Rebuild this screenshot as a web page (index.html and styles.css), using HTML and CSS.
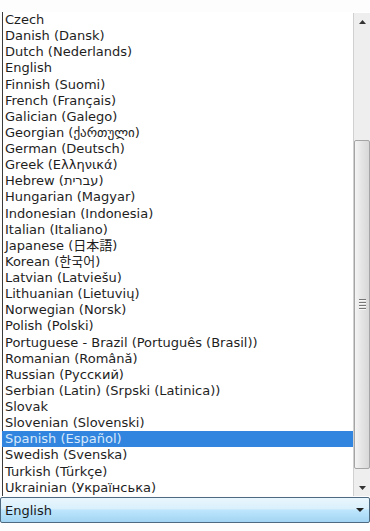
FILE: index.html
```html
<!DOCTYPE html>
<html>
<head>
    <link rel="stylesheet" href="styles.css">
</head>
<body>
    <div class="picker">
        <div class="listbox">
            <ul class="options">
                <li>Czech</li>
                <li>Danish (Dansk)</li>
                <li>Dutch (Nederlands)</li>
                <li>English</li>
                <li>Finnish (Suomi)</li>
                <li>French (Français)</li>
                <li>Galician (Galego)</li>
                <li>Georgian (ქართული)</li>
                <li>German (Deutsch)</li>
                <li>Greek (Ελληνικά)</li>
                <li>Hebrew (עברית)</li>
                <li>Hungarian (Magyar)</li>
                <li>Indonesian (Indonesia)</li>
                <li>Italian (Italiano)</li>
                <li>Japanese (日本語)</li>
                <li>Korean (한국어)</li>
                <li>Latvian (Latviešu)</li>
                <li>Lithuanian (Lietuvių)</li>
                <li>Norwegian (Norsk)</li>
                <li>Polish (Polski)</li>
                <li>Portuguese - Brazil (Português (Brasil))</li>
                <li>Romanian (Română)</li>
                <li>Russian (Русский)</li>
                <li>Serbian (Latin) (Srpski (Latinica))</li>
                <li>Slovak</li>
                <li>Slovenian (Slovenski)</li>
                <li class="selected">Spanish (Español)</li>
                <li>Swedish (Svenska)</li>
                <li>Turkish (Türkçe)</li>
                <li>Ukrainian (Українська)</li>
            </ul>
            <div class="scrollbar">
                <div class="arrow">
                    <svg width="7" height="4" viewBox="0 0 7 4"><path d="M0 4 L3.5 0 L7 4 Z" fill="#333"/></svg>
                </div>
                <div class="gap-top"></div>
                <div class="thumb">
                    <span class="grip"></span>
                    <span class="grip"></span>
                    <span class="grip"></span>
                    <span class="grip"></span>
                </div>
                <div class="gap-bottom"></div>
                <div class="arrow">
                    <svg width="7" height="4" viewBox="0 0 7 4"><path d="M0 0 L3.5 4 L7 0 Z" fill="#333"/></svg>
                </div>
            </div>
        </div>
        <div class="combo">
            <span class="combo-value">English</span>
            <svg width="8" height="4" viewBox="0 0 8 4"><path d="M0 0 L4 4 L8 0 Z" fill="#222"/></svg>
        </div>
    </div>
</body>
</html>
```

FILE: styles.css
```css
html, body {
    margin: 0;
    background: #fdfdfd;
}

.picker {
    padding-top: 12px;
    font-family: "DejaVu Sans", "Noto Sans CJK JP", "Noto Sans CJK KR", sans-serif;
    font-size: 13px;
    color: #1e1e1e;
}

.listbox {
    display: flex;
    height: 484px;
    margin-left: 2px;
    border-left: 1px solid #3a3a3a;
    background: #fff;
}

.options {
    flex-grow: 1;
    list-style: none;
    margin: 0;
    padding: 0;
}

.options li {
    height: 16.14px;
    line-height: 16px;
    padding-left: 2px;
    white-space: nowrap;
}

.options li.selected {
    background: #3185de;
    color: #d6e8fb;
    margin-left: -1px;
    padding-left: 3px;
}

.scrollbar {
    width: 16px;
    margin-top: 1px;
    border-left: 1px solid #d0d0d0;
    background: #eeeeee;
    display: grid;
    grid-template-rows: 17px 110px 1fr 10px 17px;
}

.arrow {
    display: flex;
    align-items: center;
    justify-content: center;
}

.thumb {
    border: 1px solid #a5a5a5;
    border-radius: 2px;
    background: linear-gradient(to right, #f4f4f4, #e4e4e4 50%, #d8d8d8);
    display: flex;
    flex-direction: column;
    align-items: center;
    justify-content: center;
    gap: 1px;
}

.grip {
    width: 7px;
    height: 1px;
    background: #777;
    border-bottom: 1px solid #f8f8f8;
}

.combo {
    height: 24px;
    margin-top: 1px;
    border: 1px solid #4d6a80;
    border-radius: 2px;
    background: linear-gradient(to bottom, #eaf6fd 0%, #d9f0fc 45%, #bee6fd 50%, #a2d4f2 100%);
    display: flex;
    align-items: center;
    justify-content: space-between;
    padding: 0 5px 0 4px;
}

.combo-value {
    color: #1a1a1a;
}
```
